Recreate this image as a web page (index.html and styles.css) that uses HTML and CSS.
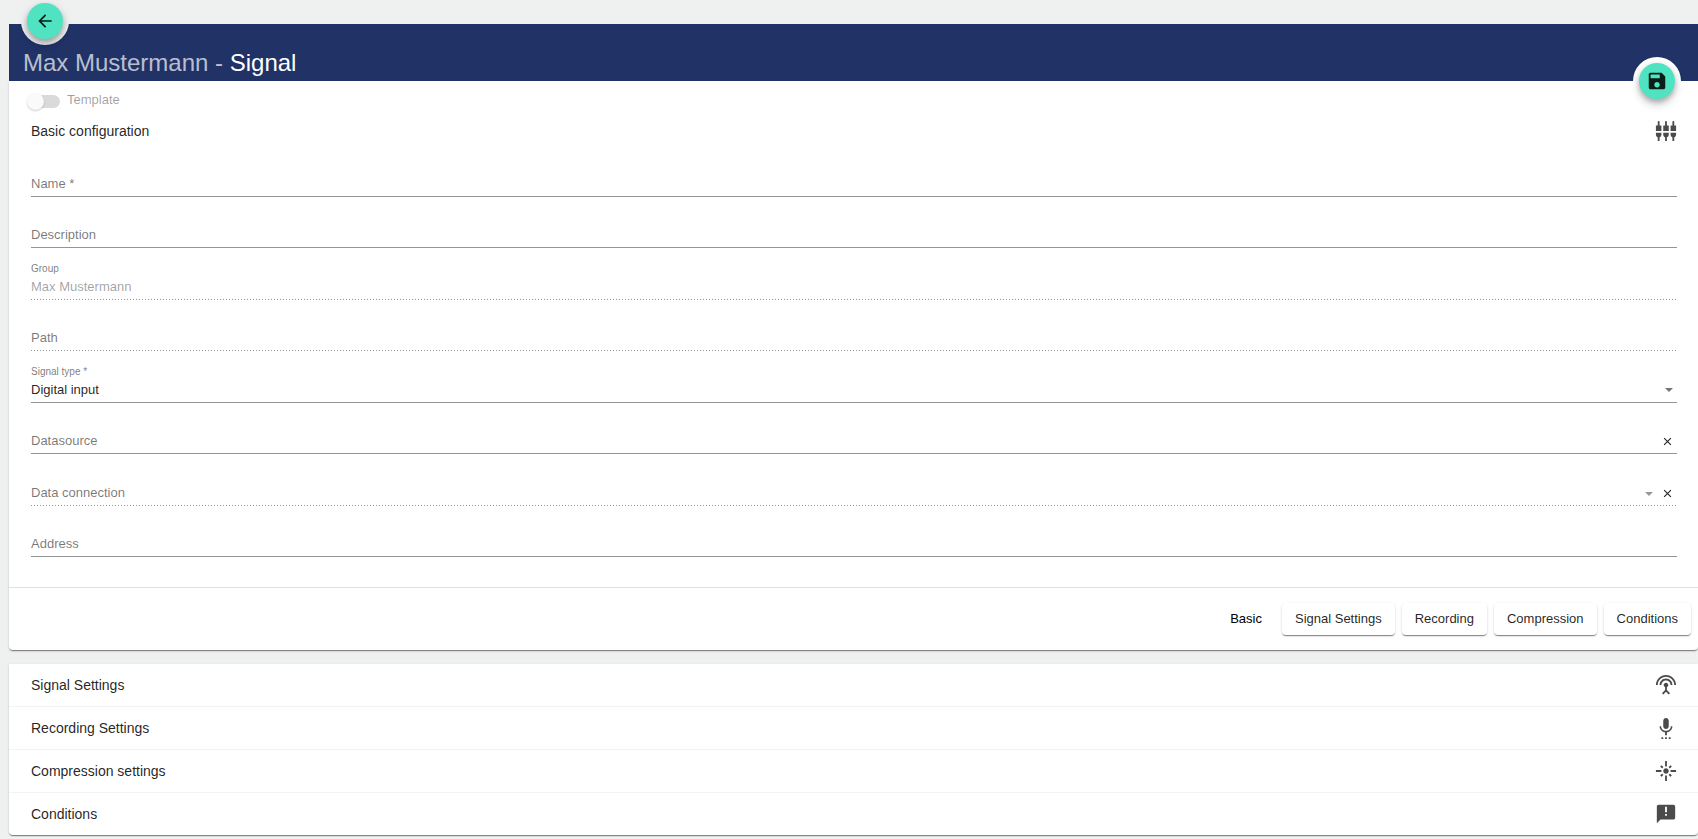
FILE: index.html
```html
<!DOCTYPE html>
<html lang="en">
<head>
<meta charset="utf-8">
<title>Max Mustermann - Signal</title>
<link rel="stylesheet" href="styles.css">
</head>
<body>
<main class="page">
  <header class="header">
    <h1 class="title"><span class="title-owner">Max Mustermann - </span>Signal</h1>
    <div class="fab-ring fab-ring-back">
      <button class="fab" type="button" aria-label="Back">
        <svg viewBox="0 0 24 24" width="20" height="20"><path d="M20 11H7.83l5.59-5.59L12 4l-8 8 8 8 1.41-1.41L7.83 13H20v-2z"/></svg>
      </button>
    </div>
    <div class="fab-ring fab-ring-save">
      <button class="fab" type="button" aria-label="Save">
        <svg viewBox="0 0 24 24" width="22" height="22"><path d="M17 3H5c-1.11 0-2 .9-2 2v14c0 1.1.89 2 2 2h14c1.1 0 2-.9 2-2V7l-4-4zm-5 16c-1.66 0-3-1.34-3-3s1.34-3 3-3 3 1.34 3 3-1.34 3-3 3zm3-10H5V5h10v4z"/></svg>
      </button>
    </div>
  </header>

  <section class="card">
    <form class="form">
      <label class="switch">
        <input class="switch-input" type="checkbox" role="switch" disabled>
        <span class="switch-label">Template</span>
      </label>

      <div class="section-head">
        <h2 class="section-title">Basic configuration</h2>
        <svg class="icon" viewBox="0 0 24 24"><path d="M5 2c0-.55-.45-1-1-1s-1 .45-1 1v4H1v6h6V6H5V2zm4 14c0 1.3.84 2.4 2 2.820V23h2v-4.180c1.160-.410 2-1.510 2-2.820v-2H9v2zm-8 0c0 1.3.84 2.4 2 2.820V23h2v-4.180C6.160 18.400 7 17.300 7 16v-2H1v2zM21 6V2c0-.55-.45-1-1-1s-1 .45-1 1v4h-2v6h6V6h-2zm-8-4c0-.55-.45-1-1-1s-1 .45-1 1v4H9v6h6V6h-2V2zm4 14c0 1.3.84 2.4 2 2.820V23h2v-4.180c1.160-.410 2-1.510 2-2.820v-2h-6v2z"/></svg>
      </div>

      <div class="fields">
        <div class="field">
          <label class="field-label" for="name">Name *</label>
          <input class="field-control" id="name" type="text" required>
        </div>
        <div class="field">
          <label class="field-label" for="description">Description</label>
          <input class="field-control" id="description" type="text">
        </div>
        <div class="field field-floating field-disabled">
          <label class="field-label" for="group">Group</label>
          <input class="field-control" id="group" type="text" value="Max Mustermann" disabled>
        </div>
        <div class="field field-disabled">
          <label class="field-label" for="path">Path</label>
          <input class="field-control" id="path" type="text" disabled>
        </div>
        <div class="field field-floating">
          <label class="field-label" for="signal-type">Signal type *</label>
          <select class="field-control" id="signal-type" required><option>Digital input</option></select>
          <span class="field-tools field-tools-select"><svg class="arrow" viewBox="0 0 8 4"><path d="M0 0h8L4 4z"/></svg></span>
        </div>
        <div class="field">
          <label class="field-label" for="datasource">Datasource</label>
          <input class="field-control" id="datasource" type="text">
          <span class="field-tools">
            <button class="clear" type="button" aria-label="Clear datasource"><svg viewBox="0 0 8 8"><path d="M1 1l6 6M7 1L1 7"/></svg></button>
          </span>
        </div>
        <div class="field field-select field-disabled">
          <label class="field-label" for="connection">Data connection</label>
          <select class="field-control" id="connection" disabled><option></option></select>
          <span class="field-tools">
            <svg class="arrow" viewBox="0 0 8 4"><path d="M0 0h8L4 4z"/></svg>
            <button class="clear" type="button" aria-label="Clear data connection"><svg viewBox="0 0 8 8"><path d="M1 1l6 6M7 1L1 7"/></svg></button>
          </span>
        </div>
        <div class="field">
          <label class="field-label" for="address">Address</label>
          <input class="field-control" id="address" type="text">
        </div>
      </div>
    </form>

    <nav class="actions" aria-label="Sections">
      <button class="action action-current" type="button">Basic</button>
      <button class="action" type="button">Signal Settings</button>
      <button class="action" type="button">Recording</button>
      <button class="action" type="button">Compression</button>
      <button class="action" type="button">Conditions</button>
    </nav>
  </section>

  <section class="panels">
    <button class="panel" type="button">Signal Settings
      <svg class="icon" viewBox="0 0 24 24"><path d="M12 5c-3.870 0-7 3.130-7 7h2c0-2.760 2.240-5 5-5s5 2.240 5 5h2c0-3.870-3.130-7-7-7zm1 9.290c.880-.390 1.500-1.260 1.500-2.290 0-1.380-1.120-2.500-2.500-2.500S9.500 10.620 9.500 12c0 1.020.620 1.900 1.500 2.290v3.300L7.590 21 9 22.410l3-3 3 3L16.410 21 13 17.590v-3.300zM12 1C5.930 1 1 5.930 1 12h2c0-4.970 4.030-9 9-9s9 4.030 9 9h2c0-6.070-4.930-11-11-11z"/></svg>
    </button>
    <button class="panel" type="button">Recording Settings
      <svg class="icon" viewBox="0 0 24 24"><path d="M12 13c1.660 0 2.990-1.340 2.990-3L15 4c0-1.660-1.340-3-3-3S9 2.340 9 4v6c0 1.660 1.340 3 3 3zm-1 9h2v2h-2v-2zm-4 0h2v2H7v-2zm8 0h2v2h-2v-2zm4-12h-1.700c0 3-2.540 5.100-5.300 5.100S6.700 13 6.700 10H5c0 3.410 2.720 6.230 6 6.720V20h2v-3.280c3.280-.490 6-3.310 6-6.720z"/></svg>
    </button>
    <button class="panel" type="button">Compression settings
      <svg class="icon" viewBox="0 0 24 24"><path d="M7 11H1v2h6v-2zm2.170-3.240L7.050 5.640 5.640 7.050l2.120 2.120 1.410-1.410zM13 1h-2v6h2V1zm5.360 6.050l-1.410-1.410-2.120 2.120 1.410 1.410 2.120-2.120zM17 11v2h6v-2h-6zm-5-2c-1.660 0-3 1.340-3 3s1.340 3 3 3 3-1.340 3-3-1.340-3-3-3zm2.830 7.240l2.120 2.120 1.410-1.410-2.120-2.120-1.410 1.410zm-9.190.710l1.410 1.410 2.120-2.120-1.410-1.410-2.120 2.120zM11 23h2v-6h-2v6z"/></svg>
    </button>
    <button class="panel" type="button">Conditions
      <svg class="icon" viewBox="0 0 24 24"><path d="M20 2H4c-1.100 0-1.990.900-1.990 2L2 22l4-4h14c1.100 0 2-.900 2-2V4c0-1.100-.900-2-2-2zm-7 12h-2v-2h2v2zm0-4h-2V4h2v6z"/></svg>
    </button>
  </section>
</main>
</body>
</html>
```

FILE: styles.css
```css
* { box-sizing: border-box; }

body {
  margin: 0;
  background: #eff1f1;
  color: rgba(0, 0, 0, 0.87);
  font-family: "Liberation Sans", Arial, sans-serif;
  font-size: 13px;
  line-height: 16px;
}

button, input, select { font: inherit; color: inherit; }

.page { padding: 24px 0 2px 9px; }

.header {
  position: relative;
  padding: 24px 14px 3px;
  background: #203266;
}

.title {
  margin: 0;
  color: #fff;
  font-size: 24px;
  font-weight: 400;
  line-height: 30px;
}

.title-owner { color: rgba(255, 255, 255, 0.7); }

.fab-ring {
  position: absolute;
  display: grid;
  place-items: center;
  width: 48px;
  height: 48px;
  border-radius: 50%;
}

.fab-ring-back { top: -27px; left: 12px; background: #eff1f1; }
.fab-ring-save { right: 17px; bottom: -24px; background: #fff; }

.fab {
  display: grid;
  place-items: center;
  width: 36px;
  height: 36px;
  padding: 0;
  border: 0;
  border-radius: 50%;
  background: #50e3c2;
  box-shadow: 0 3px 5px rgba(0, 0, 0, 0.2), 0 6px 10px rgba(0, 0, 0, 0.14), 0 1px 12px rgba(0, 0, 0, 0.08);
}

.fab svg { fill: rgba(0, 0, 0, 0.87); }

.card, .panels {
  background: #fff;
  border-radius: 0 0 4px 4px;
  box-shadow: 0 2px 1px -1px rgba(0, 0, 0, 0.3), 0 1px 1px rgba(0, 0, 0, 0.2), 0 1px 3px rgba(0, 0, 0, 0.12);
}

.form { padding: 11px 21px 30px 22px; }

.switch {
  display: inline-flex;
  align-items: center;
  gap: 7px;
  color: rgba(0, 0, 0, 0.38);
}

.switch-input {
  appearance: none;
  width: 29px;
  height: 13px;
  margin: 3px 0 0;
  border-radius: 8px;
  background: #dadada;
}

.switch-input::before {
  content: "";
  display: block;
  width: 17px;
  height: 17px;
  margin: -2px 0 0 -4px;
  border-radius: 50%;
  background: #fafafa;
  box-shadow: 0 1px 2px rgba(0, 0, 0, 0.2);
}

.section-head {
  display: flex;
  align-items: center;
  justify-content: space-between;
  margin-top: 8px;
}

.section-title { margin: 0; font-size: 14px; font-weight: 400; }

.icon { width: 22px; height: 22px; fill: #4b4b4b; }

.fields { padding-top: 4px; }

.field {
  display: grid;
  grid-template-columns: 1fr auto;
  align-items: end;
  height: 51px;
  border-bottom: 1px solid #949494;
}

.field-floating, .field-select { height: 52px; }

.field-label, .field-control { grid-row: 1; grid-column: 1; }

.field-label { padding-bottom: 4px; color: rgba(0, 0, 0, 0.54); }

.field-floating .field-label { padding-bottom: 22px; font-size: 10px; }

.field-control {
  appearance: none;
  grid-column: 1 / -1;
  width: 100%;
  padding: 0 0 4px;
  border: 0;
  outline: 0;
  background: transparent;
  line-height: 16px;
}

.field-tools {
  grid-row: 1;
  grid-column: 2;
  display: flex;
  align-items: center;
  gap: 10px;
  padding: 0 5px 7px 0;
}

.field-tools-select { padding: 0 4px 10px 0; }

.field-disabled {
  border-bottom: 0;
  padding-bottom: 1px;
  background: repeating-linear-gradient(to right, #949494 0 1px, #fff 1px 3px) bottom / 100% 1px no-repeat;
}

.field-disabled .field-control { color: rgba(0, 0, 0, 0.38); opacity: 1; }

.arrow { width: 8px; height: 4px; fill: #757575; }
.field-disabled .arrow { fill: #999; }

.clear {
  display: grid;
  width: 9px;
  height: 9px;
  padding: 0;
  border: 0;
  background: none;
}

.clear svg { width: 9px; height: 9px; fill: none; stroke: #222; }

.actions {
  display: flex;
  justify-content: flex-end;
  gap: 7px;
  padding: 15px 7px;
  border-top: 1px solid #e0e0e0;
}

.action {
  padding: 8px 13px;
  border: 0;
  border-radius: 4px;
  background: #fff;
  box-shadow: 0 2px 1px -1px rgba(0, 0, 0, 0.3), 0 1px 1px rgba(0, 0, 0, 0.2), 0 1px 3px rgba(0, 0, 0, 0.12);
}

.action-current { box-shadow: none; color: #000; }

.panels { margin-top: 14px; }

.panel {
  display: flex;
  align-items: center;
  justify-content: space-between;
  width: 100%;
  padding: 10px 21px 10px 22px;
  border: 0;
  border-bottom: 1px solid #f3f3f3;
  background: none;
  font-size: 14px;
  text-align: left;
}

.panel:last-child { border-bottom: 0; }
```
